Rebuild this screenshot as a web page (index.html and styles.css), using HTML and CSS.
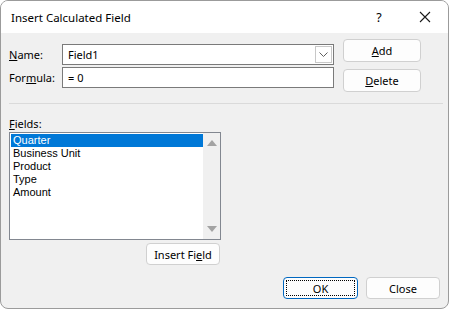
FILE: index.html
```html
<!DOCTYPE html>
<html lang="en">
<head>
    <meta charset="UTF-8">
    <meta name="viewport" content="width=device-width, initial-scale=1.0">
    <title>Insert Calculated Field</title>
    <link rel="stylesheet" href="styles.css">
</head>
<body>
    <div class="window">
        <div class="titlebar">
            <span class="title">Insert Calculated Field</span>
            <span class="help">?</span>
            <span class="close">
                <svg width="12" height="12" viewBox="0 0 12 12">
                    <path d="M1 1 L11 11 M11 1 L1 11" stroke="#1a1a1a" stroke-width="1.1" fill="none"/>
                </svg>
            </span>
        </div>

        <div class="content">
            <div class="top-row">
                <div class="form-grid">
                    <label class="lbl" for="name"><u>N</u>ame:</label>
                    <div class="combo">
                        <span class="value" id="name">Field1</span>
                        <span class="drop">
                            <svg width="9" height="5" viewBox="0 0 9 5">
                                <path d="M0.5 0.5 L4.5 4.5 L8.5 0.5" stroke="#606060" stroke-width="1" fill="none"/>
                            </svg>
                        </span>
                    </div>
                    <label class="lbl" for="formula">For<u>m</u>ula:</label>
                    <div class="textbox" id="formula">= 0</div>
                </div>
                <div class="side-buttons">
                    <button class="btn btn-side"><u>A</u>dd</button>
                    <button class="btn btn-side"><u>D</u>elete</button>
                </div>
            </div>

            <div class="separator"></div>

            <div class="fields-label"><u>F</u>ields:</div>
            <div class="listbox">
                <ul class="items">
                    <li class="item selected">Quarter</li>
                    <li class="item">Business Unit</li>
                    <li class="item">Product</li>
                    <li class="item">Type</li>
                    <li class="item">Amount</li>
                </ul>
                <div class="scrollbar">
                    <span class="arrow arrow-up"></span>
                    <span class="arrow arrow-down"></span>
                </div>
            </div>
            <div class="insert-row">
                <button class="btn btn-insert">Insert Fi<u>e</u>ld</button>
            </div>

            <div class="bottom-row">
                <button class="btn btn-ok"><span class="focus">OK</span></button>
                <button class="btn btn-close">Close</button>
            </div>
        </div>
    </div>
</body>
</html>
```

FILE: styles.css
```css
* {
    margin: 0;
    padding: 0;
    box-sizing: border-box;
}

body {
    font-family: "Noto Sans", "DejaVu Sans", sans-serif;
    font-size: 11px;
    color: #000;
    background-color: #fff;
}

.window {
    width: 449px;
    height: 309px;
    border: 1px solid #9b9b9b;
    border-radius: 8px;
    background-color: #f0f0f0;
    overflow: hidden;
}

/* barra de título */
.titlebar {
    height: 32px;
    background-color: #fff;
    display: flex;
    align-items: center;
    padding-left: 10px;
}

.title {
    flex: 1;
    font-size: 11.5px;
}

.help {
    width: 46px;
    text-align: center;
    font-size: 12.5px;
}

.close {
    width: 46px;
    display: flex;
    justify-content: center;
    align-items: center;
}

.content {
    padding: 6px 7px 0 7px;
}

.top-row {
    display: flex;
}

.form-grid {
    display: grid;
    grid-template-columns: 54px 272px;
    grid-auto-rows: 21px;
    row-gap: 2px;
    padding-top: 5px;
    align-items: center;
}

.lbl {
    padding-left: 1px;
    line-height: 21px;
    height: 21px;
}

.combo,
.textbox {
    height: 21px;
    background-color: #fff;
    border: 1px solid #7a7a7a;
    display: flex;
    align-items: center;
}

.combo .value,
.textbox {
    padding-left: 5px;
}

.combo .value {
    flex: 1;
}

.drop {
    width: 17px;
    height: 17px;
    margin-right: 1px;
    border: 1px solid #c8c8c8;
    display: flex;
    justify-content: center;
    align-items: center;
}

.side-buttons {
    display: flex;
    flex-direction: column;
    gap: 7px;
    margin-left: 9px;
}

.btn {
    font-family: inherit;
    font-size: 11px;
    color: #000;
    background-color: #fdfdfd;
    border: 1px solid #d0d0d0;
    border-radius: 4px;
    display: flex;
    justify-content: center;
    align-items: center;
}

.btn-side {
    width: 78px;
    height: 23px;
}

.separator {
    height: 1px;
    background-color: #dadada;
    margin-top: 11px;
    width: 434px;
    margin-left: 1px;
}

.fields-label {
    margin-top: 12px;
    line-height: 16px;
    padding-left: 1px;
}

/* lista de campos */
.listbox {
    width: 212px;
    height: 108px;
    border: 1px solid #828790;
    background-color: #fff;
    display: flex;
    margin-left: 1px;
}

.items {
    list-style: none;
    flex: 1;
    padding: 1px 0 0 1px;
    font-family: "Liberation Sans", Arial, sans-serif;
    font-size: 11px;
}

.item {
    height: 13px;
    line-height: 13px;
    padding-left: 2px;
}

.item.selected {
    background-color: #0078d7;
    color: #fff;
}

.scrollbar {
    width: 17px;
    background-color: #f0f0f0;
    display: flex;
    flex-direction: column;
    justify-content: space-between;
    align-items: center;
    padding: 7px 0 7px 0;
}

.arrow {
    width: 0;
    height: 0;
    border-left: 5px solid transparent;
    border-right: 5px solid transparent;
}

.arrow-up {
    border-bottom: 6px solid #a3a3a3;
}

.arrow-down {
    border-top: 6px solid #a3a3a3;
}

.insert-row {
    width: 212px;
    display: flex;
    justify-content: flex-end;
    margin-top: 3px;
    margin-left: 1px;
    padding-right: 1px;
}

.btn-insert {
    width: 74px;
    height: 22px;
}

.bottom-row {
    display: flex;
    justify-content: flex-end;
    gap: 8px;
    margin-top: 12px;
    padding-right: 1px;
}

.btn-ok {
    width: 75px;
    height: 22px;
    border: 1px solid #0067c0;
    padding: 2px;
}

.btn-ok .focus {
    width: 100%;
    height: 100%;
    border: 1px dotted #000;
    display: flex;
    justify-content: center;
    align-items: center;
}

.btn-close {
    width: 74px;
    height: 22px;
}
```
